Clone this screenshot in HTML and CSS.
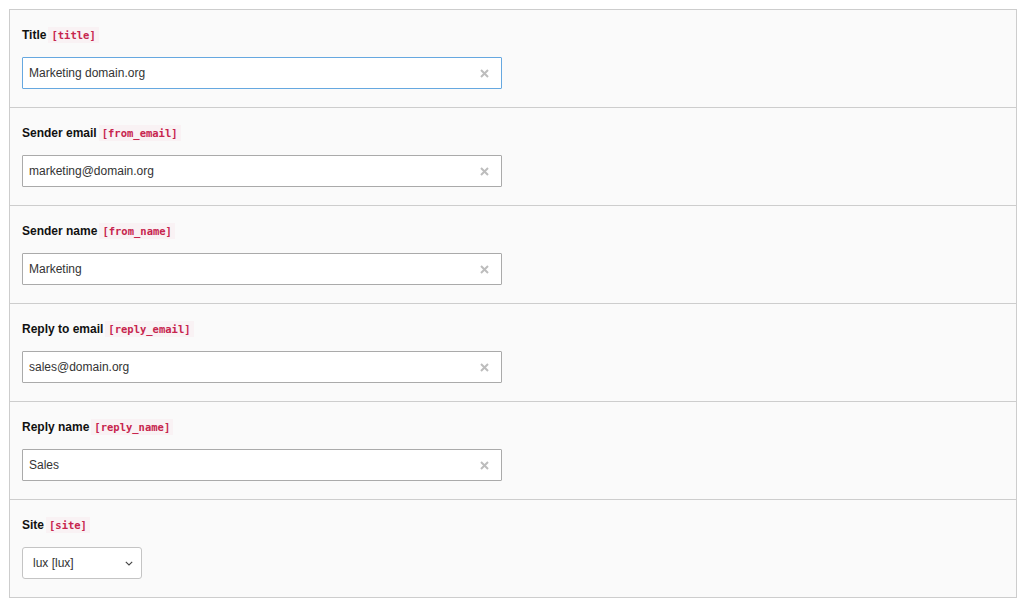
FILE: index.html
```html
<!DOCTYPE html>
<html>
<head>
<meta charset="utf-8">
<link rel="stylesheet" href="styles.css">
</head>
<body>
<div class="panel">
  <div class="row">
    <div class="label"><span class="name">Title</span><code>[title]</code></div>
    <div class="input focused"><span class="val">Marketing domain.org</span><svg class="clear" width="9" height="9" viewBox="0 0 9 9"><path d="M1 1L8 8M8 1L1 8" stroke="#bdbdbd" stroke-width="2"/></svg></div>
  </div>
  <div class="row">
    <div class="label"><span class="name">Sender email</span><code>[from_email]</code></div>
    <div class="input"><span class="val">marketing@domain.org</span><svg class="clear" width="9" height="9" viewBox="0 0 9 9"><path d="M1 1L8 8M8 1L1 8" stroke="#bdbdbd" stroke-width="2"/></svg></div>
  </div>
  <div class="row">
    <div class="label"><span class="name">Sender name</span><code>[from_name]</code></div>
    <div class="input"><span class="val">Marketing</span><svg class="clear" width="9" height="9" viewBox="0 0 9 9"><path d="M1 1L8 8M8 1L1 8" stroke="#bdbdbd" stroke-width="2"/></svg></div>
  </div>
  <div class="row">
    <div class="label"><span class="name">Reply to email</span><code>[reply_email]</code></div>
    <div class="input"><span class="val">sales@domain.org</span><svg class="clear" width="9" height="9" viewBox="0 0 9 9"><path d="M1 1L8 8M8 1L1 8" stroke="#bdbdbd" stroke-width="2"/></svg></div>
  </div>
  <div class="row">
    <div class="label"><span class="name">Reply name</span><code>[reply_name]</code></div>
    <div class="input"><span class="val">Sales</span><svg class="clear" width="9" height="9" viewBox="0 0 9 9"><path d="M1 1L8 8M8 1L1 8" stroke="#bdbdbd" stroke-width="2"/></svg></div>
  </div>
  <div class="row">
    <div class="label"><span class="name">Site</span><code>[site]</code></div>
    <div class="select"><span class="val">lux [lux]</span><svg class="chev" width="8" height="5" viewBox="0 0 8 5"><path d="M0.8 0.8L4 4L7.2 0.8" stroke="#444" stroke-width="1.1" fill="none"/></svg></div>
  </div>
</div>
</body>
</html>
```

FILE: styles.css
```css
html, body {
  margin: 0;
  padding: 0;
  background: #fff;
}
body {
  padding: 9px 7px 0 9px;
  font-family: "Liberation Sans", Arial, sans-serif;
}
.panel {
  width: 1006px;
  border: 1px solid #cdcdcd;
  background: #fafafa;
}
.row {
  padding: 16px 12px 18px 12px;
  border-top: 1px solid #cdcdcd;
}
.row:first-child {
  border-top: none;
}
.label {
  display: flex;
  align-items: center;
  gap: 2px;
  height: 17px;
  margin-bottom: 14px;
}
.name {
  font-size: 12px;
  font-weight: bold;
  color: #111;
}
code {
  font-family: "DejaVu Sans Mono", "Liberation Mono", monospace;
  font-size: 10.5px;
  font-weight: bold;
  color: #c7254e;
  background: #f9f2f4;
  padding: 2px 3px;
  line-height: 12px;
}
.input {
  box-sizing: border-box;
  width: 480px;
  height: 32px;
  border: 1px solid #aaaaaa;
  border-radius: 1px;
  background: #fff;
  display: flex;
  align-items: center;
  justify-content: space-between;
  padding: 0 12px 0 6px;
}
.input.focused {
  border-color: #66a8e0;
}
.val {
  font-size: 12px;
  color: #333;
}
.select {
  box-sizing: border-box;
  width: 120px;
  height: 32px;
  border: 1px solid #c4c4c4;
  border-radius: 3px;
  background: #fff;
  display: flex;
  align-items: center;
  justify-content: space-between;
  padding: 0 8px 0 10px;
}
```
